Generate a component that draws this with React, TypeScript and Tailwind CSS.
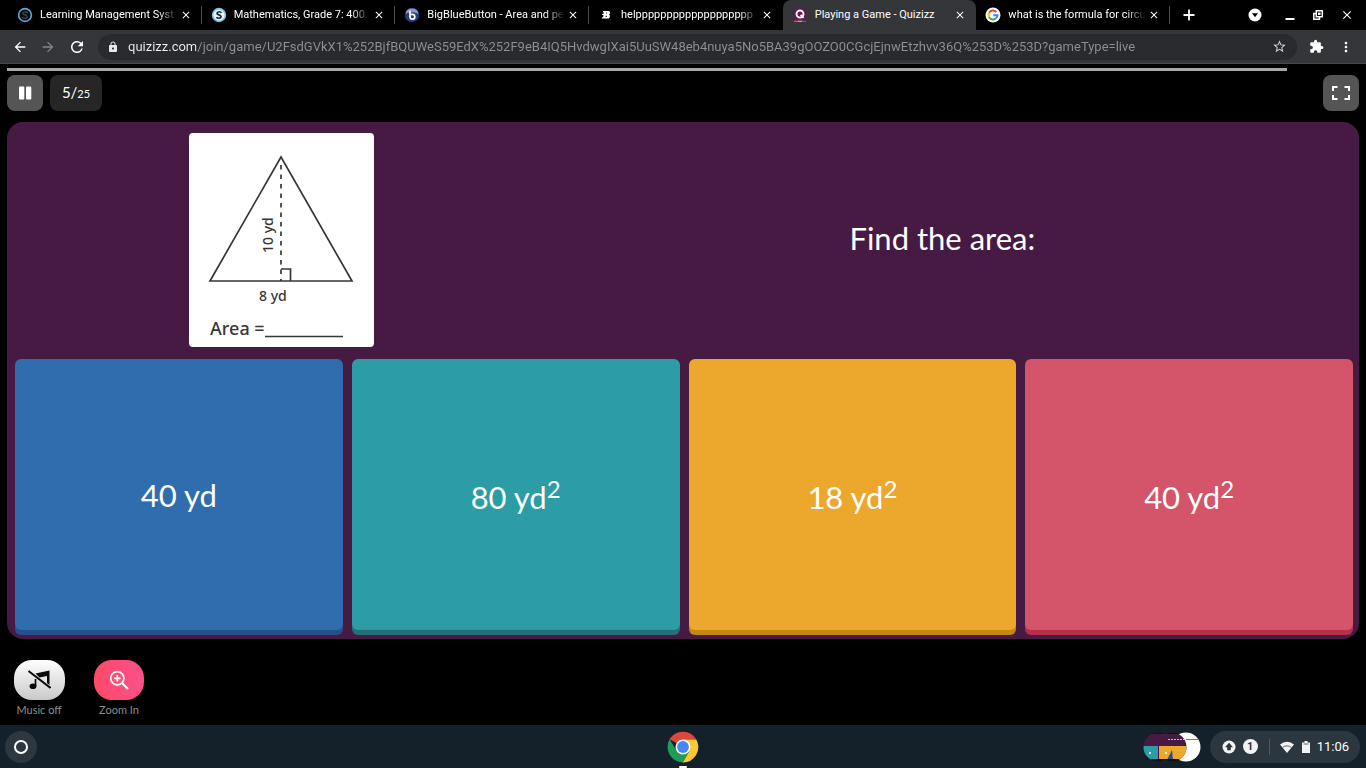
import type { ReactNode } from "react";
import { clsx } from "clsx";
import { MdArrowBack, MdArrowForward, MdClose, MdExtension, MdLock, MdMoreVert, MdRefresh, MdStarBorder } from "react-icons/md";

type Tab = { title: string; icon: ReactNode; active?: boolean; divider?: boolean };

const tabs: Tab[] = [
  { title: "Learning Management Syst", icon: <RingIcon />, divider: true },
  { title: "Mathematics, Grade 7: 400.", icon: <RingIcon light />, divider: true },
  { title: "BigBlueButton - Area and pe", icon: <BlueButtonIcon />, divider: true },
  { title: "helppppppppppppppppppp", icon: <BrainlyIcon /> },
  { title: "Playing a Game - Quizizz", icon: <QuizizzIcon />, active: true },
  { title: "what is the formula for circu", icon: <GoogleIcon />, divider: true },
];

const answers = [
  { value: "40 yd", squared: false, color: "bg-[#2f6dae] shadow-[0_5px_0_#26508a]" },
  { value: "80 yd", squared: true, color: "bg-[#2c9ca6] shadow-[0_5px_0_#256f78]" },
  { value: "18 yd", squared: true, color: "bg-[#eca82c] shadow-[0_5px_0_#c68716]" },
  { value: "40 yd", squared: true, color: "bg-[#d4546a] shadow-[0_5px_0_#b52f4b]" },
];

const pageUrl =
  "quizizz.com/join/game/U2FsdGVkX1%252BjfBQUWeS59EdX%252F9eB4IQ5HvdwgIXai5UuSW48eb4nuya5No5BA39gOOZO0CGcjEjnwEtzhvv36Q%253D%253D?gameType=live";

function RingIcon({ light }: { light?: boolean }) {
  return (
    <svg viewBox="0 0 16 16" className="size-4">
      <circle cx="8" cy="8" r="6.4" fill={light ? "#e8f3f8" : "#05070a"} stroke={light ? "#7cc0dc" : "#5aa9dd"} strokeWidth="1.6" />
      <path
        d="M10.4 5.8C9.8 4.4 6.2 4.2 6 6.3c-.1 1.9 4.2 1.2 4.1 3.4-.2 2-3.8 1.9-4.5.5"
        fill="none"
        stroke={light ? "#1b2a33" : "#354049"}
        strokeWidth="1.7"
      />
    </svg>
  );
}

function BlueButtonIcon() {
  return (
    <svg viewBox="0 0 16 16" className="size-4">
      <circle cx="8" cy="8" r="7.2" fill="#283a80" />
      <path d="M1.5 7a6.6 6.6 0 0 1 13 0C11 4.5 5 4.5 1.5 7z" fill="#8c97c4" />
      <path d="M6 3.8v6a2.4 2.4 0 1 0 2.4-2.4H6" fill="none" stroke="#fff" strokeWidth="1.7" />
    </svg>
  );
}

function BrainlyIcon() {
  return (
    <svg viewBox="0 0 16 16" className="size-4">
      <path
        fillRule="evenodd"
        fill="#fff"
        d="M5 4h5.6c1.8.2 1.8 2.800.4 3.400 1.500.8 1 3.900-1 4.100H4v-1.300h1.200L5.500 8H4.200V6.700h1.500V5.300H5zM8 5.600v.9h.9v-.9zM7.700 8.700v1.200h1.100V8.700z"
      />
    </svg>
  );
}

function QuizizzIcon() {
  return (
    <svg viewBox="0 0 16 16" className="size-4">
      <rect x="1.5" y="1" width="13" height="14" rx="2" fill="#5c1a4f" />
      <circle cx="8" cy="7" r="3.5" fill="none" stroke="#fff" strokeWidth="1.9" />
      <path d="M8.5 8l3.2 2.8" stroke="#fff" strokeWidth="1.7" />
      <path d="M2 14.300h4" stroke="#d4546a" strokeWidth="1.3" />
      <path d="M6 14.300h4" stroke="#eca82c" strokeWidth="1.3" />
      <path d="M10 14.300h4" stroke="#2f6dae" strokeWidth="1.3" />
    </svg>
  );
}

function GoogleIcon() {
  return (
    <svg viewBox="0 0 16 16" className="size-4">
      <circle cx="8" cy="8" r="7.5" fill="#fff" />
      <g fill="none" strokeWidth="2">
        <path d="M11.3 5a4.5 4.5 0 0 0-7.2.8" stroke="#ea4335" />
        <path d="M4.1 5.8a4.5 4.5 0 0 0 0 4.4" stroke="#fbbc05" />
        <path d="M4.1 10.2a4.5 4.5 0 0 0 6.9 1.1" stroke="#34a853" />
        <path d="M11 11.3A4.5 4.5 0 0 0 12.5 8.2H8.2" stroke="#4285f4" />
      </g>
    </svg>
  );
}

function BrowserTab({ tab }: { tab: Tab }) {
  return (
    <div
      className={clsx(
        "relative flex h-[30px] min-w-0 flex-[0_1_194px] items-center pl-[9px] pr-2",
        tab.active && "rounded-t-lg bg-[#35363a]",
      )}
    >
      <button
        type="button"
        role="tab"
        aria-selected={!!tab.active}
        className="flex min-w-0 flex-1 items-center gap-[7px] text-left"
      >
        <span className="shrink-0">{tab.icon}</span>
        <span
          className={clsx(
            "flex-1 overflow-hidden whitespace-nowrap text-[11px] leading-4 text-white",
            !tab.active && "mask-r-from-85%",
          )}
        >
          {tab.title}
        </span>
      </button>
      <button type="button" aria-label={`Close ${tab.title}`} className="p-0.5 text-white">
        <MdClose className="size-3" />
      </button>
      {tab.divider && <span className="absolute right-0 top-1.5 h-[18px] w-px bg-[#4a4b4e]" />}
    </div>
  );
}

function TabStrip() {
  return (
    <div className="flex h-[30px] items-center justify-between bg-black pl-2 pr-3 text-white">
      <div className="flex min-w-0 flex-1 items-center">
        <div role="tablist" className="flex min-w-0 flex-[0_1_1162px]">
          {tabs.map((tab) => (
            <BrowserTab key={tab.title} tab={tab} />
          ))}
        </div>
        <button type="button" aria-label="New tab" className="ml-3">
          <svg viewBox="0 0 14 14" className="size-[14px]">
            <path d="M7 1.5v11M1.5 7h11" stroke="#fff" strokeWidth="1.8" />
          </svg>
        </button>
      </div>
      <div className="flex items-center gap-4">
        <button type="button" aria-label="Search tabs">
          <svg viewBox="0 0 14 14" className="size-[14px]">
            <circle cx="7" cy="7" r="6.5" fill="#fff" />
            <path d="M4 5.2h6L7 9.2z" fill="#000" />
          </svg>
        </button>
        <button type="button" aria-label="Minimize" className="ml-1.5">
          <svg viewBox="0 0 12 12" className="size-3">
            <path d="M1.5 10h9" stroke="#fff" strokeWidth="2" />
          </svg>
        </button>
        <button type="button" aria-label="Restore">
          <svg viewBox="0 0 12 12" className="size-3">
            <path d="M4.3 1.8h6v6h-6zM4 4.5H1.8v5.7h5.7V8" fill="none" stroke="#fff" strokeWidth="1.5" />
            <path d="M6 3.5h2.5V6H6z" fill="#fff" />
          </svg>
        </button>
        <button type="button" aria-label="Close window">
          <MdClose className="size-[14px]" />
        </button>
      </div>
    </div>
  );
}

function Toolbar() {
  return (
    <div className="flex h-[34px] items-center border-b border-[#48494c] bg-[#35363a] pl-3 pr-3">
      <button type="button" aria-label="Back" className="text-white">
        <MdArrowBack className="size-4" />
      </button>
      <button type="button" aria-label="Forward" className="ml-3 text-[#85868a]">
        <MdArrowForward className="size-4" />
      </button>
      <button type="button" aria-label="Reload" className="ml-3 text-white">
        <MdRefresh className="size-[18px]" />
      </button>
      <div className="ml-3 flex h-[26px] min-w-0 flex-1 items-center rounded-full bg-[#282a2d] pl-[9px] pr-2.5">
        <MdLock className="size-3 shrink-0 text-gray-200" />
        <input
          aria-label="Address"
          readOnly
          value={pageUrl}
          className="ml-[9px] min-w-0 flex-1 bg-[linear-gradient(90deg,#f1f3f4_68px,#8e9094_68px)] bg-clip-text text-[13px] leading-4 text-transparent outline-none"
        />
        <button type="button" aria-label="Bookmark this page" className="text-gray-300">
          <MdStarBorder className="size-[15px]" />
        </button>
      </div>
      <button type="button" aria-label="Extensions" className="ml-3 text-white">
        <MdExtension className="size-[15px]" />
      </button>
      <button type="button" aria-label="Menu" className="ml-3.5 text-white">
        <MdMoreVert className="size-4" />
      </button>
    </div>
  );
}

function TriangleFigure() {
  return (
    <svg
      viewBox="0 0 185 214"
      role="img"
      aria-label="Triangle with base 8 yd and height 10 yd"
      className="h-[214px] w-[185px] rounded bg-white font-['Noto_Sans',sans-serif]"
    >
      <g fill="none" stroke="#3a3638" strokeWidth="1.7">
        <path d="M92 24L21 148h142z" />
        <path d="M92 32v116" strokeDasharray="4.5 5" />
        <path d="M92 136h9.5v12" />
        <path d="M76 203.5h78" strokeWidth="1.4" />
      </g>
      <g fill="#3a3638" className="font-medium">
        <text transform="translate(84 120) rotate(-90)" fontSize="14">10 yd</text>
        <text x="70" y="168" fontSize="14">8 yd</text>
        <text x="21" y="202" fontSize="18">Area =</text>
      </g>
    </svg>
  );
}

function GameHeader() {
  return (
    <header>
      <div className="mx-[7px] mt-1 h-[3px]">
        <div className="h-full w-[94.7%] bg-[#a8a8a8]" />
      </div>
      <div className="mt-1 flex items-center px-[7px]">
        <button type="button" aria-label="Pause" className="grid size-9 place-items-center rounded-lg bg-[#555]">
          <svg viewBox="0 0 14 14" className="size-[14px]">
            <rect x="1" y="0.5" width="5.3" height="13" rx="1" fill="#fff" />
            <rect x="8" y="0.5" width="5.3" height="13" rx="1" fill="#fff" />
          </svg>
        </button>
        <div className="ml-[7px] flex h-9 w-[52px] items-center justify-center rounded-lg bg-[#262626]">
          <span className="text-[15px] leading-5">
            5/<span className="text-[11px]">25</span>
          </span>
        </div>
        <button type="button" aria-label="Full screen" className="ml-auto grid size-9 place-items-center rounded-lg bg-[#555]">
          <svg viewBox="0 0 18 14" className="h-[14px] w-[18px]">
            <path d="M1 5V1h4.5M12.5 1H17v4M17 9v4h-4.5M5.5 13H1V9" fill="none" stroke="#fff" strokeWidth="2" />
          </svg>
        </button>
      </div>
    </header>
  );
}

function QuestionPanel() {
  return (
    <main className="mx-[7px] mt-[11px] flex min-h-0 flex-1 flex-col rounded-2xl bg-[#461a42] pb-[9px] pl-2 pr-1.5">
      <section className="grid grid-cols-[27fr_40fr] items-center pb-3 pr-4 pt-[11px]">
        <div className="flex justify-center">
          <TriangleFigure />
        </div>
        <h1 className="pb-1 text-center text-[31px] leading-9">Find the area:</h1>
      </section>
      <section className="grid min-h-0 flex-1 grid-cols-4 gap-[9px]">
        {answers.map((answer) => (
          <button
            key={answer.value + answer.squared}
            type="button"
            className={clsx("rounded-md text-[31px] leading-9", answer.color)}
          >
            {answer.value}
            {answer.squared && <sup className="static align-super text-2xl leading-8">2</sup>}
          </button>
        ))}
      </section>
    </main>
  );
}

function GameFooter() {
  return (
    <footer className="flex gap-[26px] px-3 pb-[7px] pt-[21px]">
      <div className="flex w-[54px] flex-col items-center">
        <button
          type="button"
          aria-labelledby="music-label"
          className="grid h-10 w-[51px] place-items-center rounded-[18px] bg-linear-to-b from-white to-[#c9c9c9]"
        >
          <svg viewBox="0 0 24 20" className="h-5 w-6">
            <path d="M8.5 3.500L22.500.5V15L20 13V6L12.500 7.500z" fill="#0a0a0a" />
            <path d="M8.500 9v7" stroke="#0a0a0a" strokeWidth="1.7" />
            <ellipse cx="6" cy="16.2" rx="3.4" ry="2.8" fill="#0a0a0a" />
            <path d="M1.5 1L23.500 18" stroke="#0a0a0a" strokeWidth="2" />
          </svg>
        </button>
        <span id="music-label" className="mt-0.5 whitespace-nowrap text-[11px] leading-4 text-[#8c8c8c]">Music off</span>
      </div>
      <div className="flex w-[54px] flex-col items-center">
        <button
          type="button"
          aria-labelledby="zoom-label"
          className="grid h-10 w-[50px] place-items-center rounded-[18px] bg-linear-to-r from-[#ff4a66] to-[#f9508a]"
        >
          <svg viewBox="0 0 20 20" className="size-5" fill="none" stroke="#fff" strokeWidth="1.7">
            <circle cx="8.3" cy="8.3" r="6.6" />
            <path d="M13 13l6 6" strokeWidth="2.2" />
            <path d="M8.3 5v6.600M5 8.300h6.600" />
          </svg>
        </button>
        <span id="zoom-label" className="mt-0.5 whitespace-nowrap text-[11px] leading-4 text-[#8c8c8c]">Zoom In</span>
      </div>
    </footer>
  );
}

function ChromeLogo() {
  return (
    <svg viewBox="0 0 32 32" className="size-8">
      <path d="M16 16L2.600 8.300A15.400 15.400 0 0 1 29.300 8.500H16z" fill="#d94a3d" />
      <path d="M16 8.500h13.300A15.400 15.400 0 0 1 15.600 31.400L22.500 19.700z" fill="#fbc934" />
      <path d="M2.600 8.300A15.400 15.400 0 0 0 15.600 31.400L22.500 19.700 9.500 19.700z" fill="#1f9d56" />
      <circle cx="16" cy="16" r="7.5" fill="#fff" />
      <circle cx="16" cy="16" r="5.9" fill="#4688f1" />
    </svg>
  );
}

function WindowPreviews() {
  return (
    <svg viewBox="0 0 58 30" className="h-[30px] w-[58px]">
      <defs>
        <clipPath id="preview-pair">
          <circle cx="15" cy="15" r="14.5" />
          <circle cx="29" cy="15" r="14.5" />
        </clipPath>
      </defs>
      <circle cx="43" cy="15" r="14.5" fill="#fff" />
      <g clipPath="url(#preview-pair)">
        <path d="M0 0h44v30H0z" fill="#461a42" />
        <path d="M0 14h15v14H0z" fill="#2c9ca6" />
        <path d="M16 14h28v14H16z" fill="#eca82c" />
        <path d="M24 28l5-10 1 10z" fill="#26508a" />
        <path d="M0 27h44v3H0zM6 0h30v2H6z" fill="#111" />
      </g>
      <path d="M25 7.5h18" stroke="#c9b8c7" strokeDasharray="2 1" />
      <path d="M43 7.5h13" stroke="#8d6c8a" />
      <circle cx="7" cy="21" r="1" fill="#fff" />
      <circle cx="23" cy="21" r="1" fill="#fff" />
    </svg>
  );
}

function Shelf() {
  return (
    <nav aria-label="Shelf" className="grid h-[43px] grid-cols-[1fr_auto_1fr] items-center bg-[#14202a] pl-[5px] pr-1.5 text-white">
      <button type="button" aria-label="Launcher" className="grid size-8 place-items-center rounded-full bg-[#2c3740]">
        <span className="size-[14px] rounded-full border-2 border-white" />
      </button>
      <button type="button" aria-label="Google Chrome" className="flex flex-col items-center self-end">
        <ChromeLogo />
        <span className="mt-[3px] h-0.5 w-2 rounded-full bg-white" />
      </button>
      <div className="flex items-center justify-end gap-[9px]">
        <button type="button" aria-label="Recent captures">
          <WindowPreviews />
        </button>
        <button type="button" className="flex h-8 items-center rounded-full bg-[#2b363f] pl-3 pr-[11px]">
          <svg viewBox="0 0 14 14" className="size-[14px]">
            <circle cx="7" cy="7" r="6.5" fill="#f1f3f4" />
            <path d="M7 2.800L11 7.200H8.800v3H5.200v-3H3z" fill="#2b363f" />
          </svg>
          <span className="ml-[7px] grid size-[15px] place-items-center rounded-full bg-[#f1f3f4] text-[11px] font-bold leading-none text-[#2b363f]">
            1
          </span>
          <span className="ml-[11px] h-4 w-px bg-[#4f5961]" />
          <svg viewBox="0 0 16 14" className="ml-[9px] h-[14px] w-4">
            <path d="M1 4.500a10.500 10.500 0 0 1 14 0L8 13z" fill="#f1f3f4" />
            <path d="M3.500 7.500a7 7 0 0 1 9 0" fill="none" stroke="#5c666e" />
          </svg>
          <svg viewBox="0 0 8 14" className="ml-[7px] h-[14px] w-2">
            <path d="M2.500 1h3v1.500H8V13H0V2.500h2.500z" fill="#f1f3f4" />
            <path d="M1.500 4h5" stroke="#5c666e" />
          </svg>
          <span className="ml-[7px] text-[13px] leading-4">11:06</span>
        </button>
      </div>
    </nav>
  );
}

export default function App() {
  return (
    <div className="flex h-screen flex-col overflow-hidden bg-black font-[Roboto,sans-serif]">
      <TabStrip />
      <Toolbar />
      <div className="flex min-h-0 flex-1 flex-col bg-black font-[Lato,sans-serif] text-white">
        <GameHeader />
        <QuestionPanel />
        <GameFooter />
      </div>
      <Shelf />
    </div>
  );
}
